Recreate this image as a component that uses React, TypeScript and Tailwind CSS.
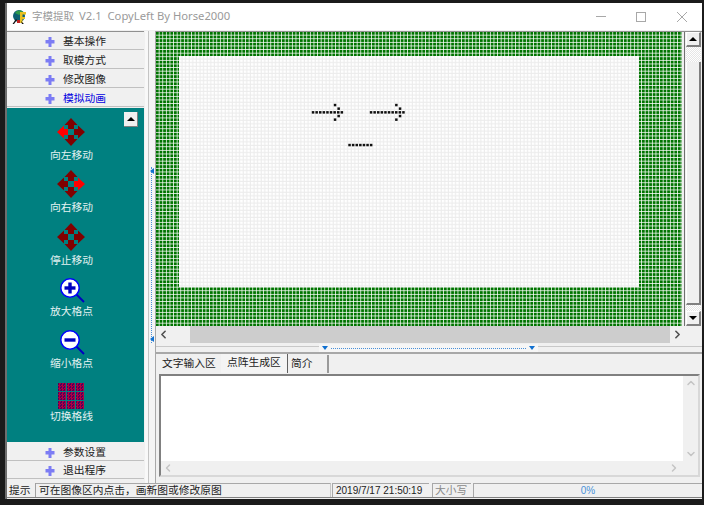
import React from 'react';
import { ChevronLeft, ChevronRight, ChevronUp, ChevronDown } from 'lucide-react';

const FONT = "font-['Liberation_Sans','Noto_Sans_CJK_SC',sans-serif]";

const PITCH = 3.6;

// matrix dots, read off the picture
const shaft = (from: number, count: number) =>
  Array.from({ length: count }, (_, i) => [from + i * PITCH, 112.3]);

const DOTS: number[][] = [
  ...shaft(313, 9),
  [335, 105],
  [338.6, 108.6],
  [338.6, 116],
  [335, 119.6],
  ...shaft(371, 10),
  [396.3, 105],
  [400, 108.6],
  [400, 116],
  [396.3, 119.6],
  ...Array.from({ length: 7 }, (_, i) => [349.5 + i * PITCH, 145]),
];

const MoveIcon = ({ hot }: { hot?: 'left' | 'right' }) => (
  <svg width="28" height="28" viewBox="0 0 28 28" className="shrink-0">
    <polygon points="14,0 20.500,7 17,7 17,11 11,11 11,7 7.500,7" fill="#800000" />
    <polygon points="14,28 20.500,21 17,21 17,17 11,17 11,21 7.500,21" fill="#800000" />
    <polygon points="0,14 7,7.500 7,11 11,11 11,17 7,17 7,20.500" fill={hot === 'left' ? '#ff0000' : '#800000'} />
    <polygon points="28,14 21,7.500 21,11 17,11 17,17 21,17 21,20.500" fill={hot === 'right' ? '#ff0000' : '#800000'} />
  </svg>
);

const ZoomIcon = ({ plus }: { plus?: boolean }) => (
  <svg width="28" height="24" viewBox="0 0 28 24" className="shrink-0 overflow-visible">
    <line x1="19" y1="16" x2="27" y2="24" stroke="#0000c0" strokeWidth="2" />
    <circle cx="13" cy="10" r="9.200" fill="#fff" stroke="#0000ff" strokeWidth="1.500" />
    <rect x="7.500" y="8.300" width="11" height="3.400" fill="#0000c0" />
    {plus && <rect x="11.300" y="4.500" width="3.400" height="11" fill="#0000c0" />}
  </svg>
);

const GridIcon = () => (
  <div className="grid grid-cols-[8px_8px_8px] grid-rows-[8px_8px_8px] gap-[1px] mb-[-2px] shrink-0">
    {Array.from({ length: 9 }, (_, i) => (
      <div
        key={i}
        className="bg-[image:repeating-conic-gradient(#b00040_0_25%,#50005c_0_50%)] bg-size-[3px_3px]"
      />
    ))}
  </div>
);

const NavButton = ({ label, active, tight }: { label: string; active?: boolean; tight?: boolean }) => (
  <div className={`h-[18px] pt-[2px] flex items-center bg-[#f0f0f0] border-b border-[#c0c0c0] ${tight ? '' : 'mb-[1px]'}`}>
    <svg width="10" height="10" viewBox="0 0 10 10" className="ml-[38px] shrink-0">
      <path d="M3.500 0h3v3h3v3.500h-3v3.500h-3v-3.500h-3v-3.500h3z" fill="#7c7cf4" />
    </svg>
    <span className={`ml-[8px] text-[10.75px] leading-none ${active ? 'text-[#0000e0]' : 'text-[#222]'}`}>{label}</span>
  </div>
);

const Tool = ({ icon, label, height }: { icon: React.ReactNode; label: string; height: string }) => (
  <div className={`flex flex-col items-center ${height}`}>
    {icon}
    <span className="mt-[2px] text-[10.75px] leading-[14px] text-[#e4f2f2]">{label}</span>
  </div>
);

const OldScrollButton = ({ down }: { down?: boolean }) => (
  <div className="w-[15px] h-[15px] shrink-0 bg-[#f0f0f0] border-t border-l border-white border-r-2 border-b-2 border-r-[#808080] border-b-[#808080] flex items-center justify-center">
    <div
      className={`w-0 h-0 border-l-[4px] border-r-[4px] border-transparent ${
        down ? 'border-t-[4px] border-t-black' : 'border-b-[4px] border-b-black'
      }`}
    />
  </div>
);

const DITHER = 'bg-[image:repeating-conic-gradient(#ffffff_0_25%,#e6e6e6_0_50%)] bg-size-[2px_2px]';

const MatrixCanvas = () => (
  <svg width="526" height="294" viewBox="156 32 526 294" className="shrink-0">
    <defs>
      <pattern id="green" x="156" y="32" width={PITCH} height={PITCH} patternUnits="userSpaceOnUse">
        <rect width={PITCH} height={PITCH} fill="#ffffff" />
        <rect width={PITCH - 0.75} height={PITCH - 0.75} fill="#007400" />
      </pattern>
      <pattern id="paper" x="179" y="56" width={PITCH} height={PITCH} patternUnits="userSpaceOnUse">
        <rect width={PITCH} height={PITCH} fill="#ececec" />
        <rect width={PITCH - 1.1} height={PITCH - 1.1} fill="#ffffff" />
      </pattern>
    </defs>
    <rect x="156" y="32" width="526" height="294" fill="url(#green)" />
    <rect x="179" y="56" width="460" height="231" fill="url(#paper)" />
    {DOTS.map(([x, y], i) => (
      <rect key={i} x={x - 1.2} y={y - 1.2} width="2.5" height="2.5" fill="#111" />
    ))}
  </svg>
);

export default function App() {
  return (
    <div className={`w-[704px] h-[505px] bg-[#1b1b1b] pt-[3px] pl-[5px] pr-[2px] pb-[6px] ${FONT}`}>
      <div className="w-full h-full flex flex-col bg-[#f0f0f0] border-l-2 border-[#6e6e6e]">
        {/* TITLE BAR */}
        <div className="h-[27px] shrink-0 bg-white flex items-center">
          <svg width="16" height="16" viewBox="0 0 16 16" className="ml-[5px] shrink-0">
            <circle cx="7" cy="7" r="6" fill="#0d5f72" />
            <path d="M3 4c2-3 6-3 8-1L7 6z" fill="#2f9a4a" />
            <path d="M8 3h6v2.500h-3.500V8H13v2h-2.500v4H8z" fill="#e8c020" />
            <path d="M5 11h3v3H5z" fill="#c02020" />
            <path d="M0.500 15 4 10l1 1-3 4zM9 12l3 3h-2z" fill="#111" />
          </svg>
          <span className="ml-[4px] text-[10.5px] text-[#9a9a9a]">字模提取</span>
          <span className="ml-[5px] text-[11.25px] text-[#9a9a9a] whitespace-pre font-['Noto_Sans',sans-serif]">
            V2.1  CopyLeft By Horse2000
          </span>
          <div className="ml-auto flex items-center">
            <div className="w-[10px] h-[1px] bg-[#a8a8a8]" />
            <div className="ml-[30px] w-[10px] h-[10px] border border-[#a8a8a8]" />
            <svg width="10" height="10" viewBox="0 0 10 10" className="ml-[31px] mr-[15px]">
              <path d="M0 0 10 10M10 0 0 10" stroke="#a8a8a8" strokeWidth="1" />
            </svg>
          </div>
        </div>

        {/* MAIN */}
        <div className="flex-1 min-h-0 flex pt-[1px]">
          {/* LEFT PANEL */}
          <div className="w-[137px] shrink-0 flex flex-col border-t border-[#909090]">
            <NavButton label="基本操作" />
            <NavButton label="取模方式" />
            <NavButton label="修改图像" />
            <NavButton label="模拟动画" active />
            <div className="relative h-[334px] bg-[#008080] pt-[10px] pr-[8px] flex flex-col items-center">
              <div className="absolute top-[4px] right-[6px] w-[14px] h-[15px] bg-[#f0f0f0] border-r border-b border-[#808080] flex items-center justify-center">
                <div className="w-0 h-0 border-l-[4px] border-r-[4px] border-b-[4px] border-transparent border-b-black" />
              </div>
              <Tool icon={<MoveIcon hot="left" />} label="向左移动" height="h-[52px]" />
              <Tool icon={<MoveIcon hot="right" />} label="向右移动" height="h-[53px]" />
              <Tool icon={<MoveIcon />} label="停止移动" height="h-[55px]" />
              <Tool icon={<ZoomIcon plus />} label="放大格点" height="h-[52px]" />
              <Tool icon={<ZoomIcon />} label="缩小格点" height="h-[53px]" />
              <Tool icon={<GridIcon />} label="切换格线" height="h-[40px]" />
            </div>
            <div className="h-[1px] shrink-0" />
            <NavButton label="参数设置" tight />
            <NavButton label="退出程序" />
          </div>

          {/* VERTICAL SPLITTER */}
          <div className="ml-[1px] w-[11px] shrink-0 flex bg-[#f8f8f8] border-r border-[#a8a8a8]">
            <div className="w-[3px] shrink-0" />
            <div className="relative flex-1 border-l border-[#c4c4c4] bg-[#f4f4f4]">
              <div className="absolute left-[2px] top-[136px] h-[176px] border-l border-dotted border-[#4a90d8]" />
              <div className="absolute left-[1px] top-[137px] w-0 h-0 border-t-[3px] border-b-[3px] border-r-[4px] border-transparent border-r-[#1070d0]" />
              <div className="absolute left-[1px] top-[305px] w-0 h-0 border-t-[3px] border-b-[3px] border-r-[4px] border-transparent border-r-[#1070d0]" />
            </div>
          </div>

          {/* RIGHT PANE */}
          <div className="flex-1 min-w-0 flex flex-col border-t border-[#909090]">
            <div className="flex h-[294px] shrink-0">
              <MatrixCanvas />
              <div className="ml-[2px] w-[1px] shrink-0 bg-[#707070]" />
              <div className="ml-[1px] w-[15px] shrink-0 flex flex-col">
                <OldScrollButton />
                <div className={`h-[15px] ${DITHER}`} />
                <div className="h-[243px] bg-[#f0f0f0] border-b-2 border-r-2 border-[#808080] border-l border-l-white" />
                <div className={`h-[6px] ${DITHER}`} />
                <OldScrollButton down />
              </div>
            </div>

            {/* HORIZONTAL SCROLLBAR */}
            <div className="h-[17px] shrink-0 w-[526px] bg-[#f0f0f0] flex items-center">
              <ChevronLeft size={13} strokeWidth={3} className="ml-[1px] text-[#505050] shrink-0" />
              <div className="ml-[20px] w-[480px] h-full shrink-0 bg-[#cdcdcd]" />
              <ChevronRight size={13} strokeWidth={3} className="ml-[1px] text-[#505050] shrink-0" />
            </div>

            {/* HORIZONTAL SPLITTER */}
            <div className="relative h-[8px] mt-[3px] shrink-0 border-b-2 border-[#a8a8a8] border-t border-t-[#c8c8c8]">
              <div className="absolute left-[163px] top-[-3px] w-[219px] h-[8px] bg-[#f6f6f6] flex items-center justify-between px-[3px]">
                <div className="w-0 h-0 border-l-[3px] border-r-[3px] border-t-[4px] border-transparent border-t-[#1070d0]" />
                <div className="flex-1 mx-[3px] border-t border-dotted border-[#4a90d8]" />
                <div className="w-0 h-0 border-l-[3px] border-r-[3px] border-t-[4px] border-transparent border-t-[#1070d0]" />
              </div>
            </div>

            {/* TABS */}
            <div className="h-[19px] shrink-0 flex items-end pl-[1px] text-[10.75px] text-[#222] leading-none">
              <div className="w-[64px] h-[18px] pb-[2px] flex items-center justify-center">文字输入区</div>
              <div className="w-[67px] h-[19px] pb-[3px] flex items-center justify-center bg-[#f4f4f4] border-r border-[#606060]">点阵生成区</div>
              <div className="w-[41px] h-[18px] pb-[2px] pl-[3px] flex items-center border-r-2 border-[#9a9a9a]">简介</div>
            </div>

            {/* MEMO */}
            <div className="mt-[1px] ml-[3px] mr-[2px] h-[103px] flex flex-col border-t-2 border-l-2 border-[#808080] border-r-2 border-r-[#d8d8d8] border-b-2 border-b-[#d8d8d8]">
              <div className="flex-1 min-h-0 flex">
                <div className="flex-1 bg-white" />
                <div className="w-[15px] bg-[#f0f0f0] flex flex-col items-center justify-between py-[1px]">
                  <ChevronUp size={12} strokeWidth={3} className="text-[#c4c4c4]" />
                  <ChevronDown size={12} strokeWidth={3} className="text-[#c4c4c4]" />
                </div>
              </div>
              <div className="h-[14px] shrink-0 bg-[#f0f0f0] flex items-center justify-between px-[1px]">
                <ChevronLeft size={12} strokeWidth={3} className="text-[#c4c4c4]" />
                <ChevronRight size={12} strokeWidth={3} className="mr-[17px] text-[#c4c4c4]" />
              </div>
            </div>
          </div>
        </div>

        {/* STATUS BAR */}
        <div className="h-[15px] shrink-0 mb-[1px] flex items-stretch text-[10.75px] leading-none text-[#222] border-b border-[#808080]">
          <div className="w-[29px] shrink-0 flex items-center pl-[2px] border-r border-[#a0a0a0]">提示</div>
          <div className="w-[295px] shrink-0 flex items-center pl-[3px] border-r border-[#c8c8c8] border-t border-t-[#a8a8a8]">可在图像区内点击，画新图或修改原图</div>
          <div className="ml-[1px] w-[97px] shrink-0 flex items-center pl-[3px] border-l border-t border-[#a8a8a8] text-[10px]">2019/7/17 21:50:19</div>
          <div className="ml-[3px] w-[39px] shrink-0 flex items-center pl-[2px] border-l border-t border-[#a8a8a8] text-[#8a8a8a]">大小写</div>
          <div className="ml-[2px] flex-1 flex items-center justify-center border-l border-t border-[#a8a8a8] text-[10px] text-[#4a90d8]">0%</div>
        </div>
      </div>
    </div>
  );
}
